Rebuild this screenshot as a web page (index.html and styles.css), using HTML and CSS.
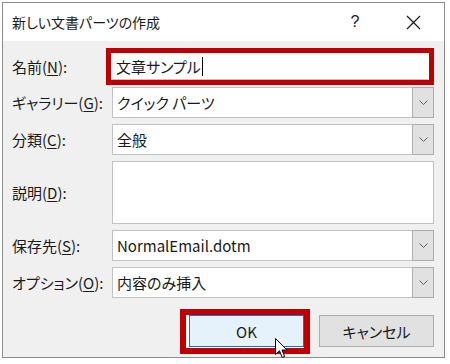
FILE: index.html
```html
<!DOCTYPE html>
<html lang="ja">
<head>
    <meta charset="UTF-8">
    <title>新しい文書パーツの作成</title>
    <link rel="stylesheet" href="styles.css">
</head>
<body>
    <div class="dialog">
        <div class="titlebar">
            <span class="title">新しい文書パーツの作成</span>
            <span class="help">?</span>
            <span class="close">
                <svg width="15" height="15" viewBox="0 0 15 15"><path d="M1 1L14 14M14 1L1 14" stroke="#1a1a1a" stroke-width="1.2" fill="none"/></svg>
            </span>
        </div>
        <div class="content">
            <div class="row row-name">
                <label class="label">名前(<u>N</u>):</label>
                <div class="mark-field">
                    <div class="field">文章サンプル<span class="caret"></span></div>
                </div>
            </div>
            <div class="row">
                <label class="label">ギャラリー(<u>G</u>):</label>
                <div class="field combo">クイック パーツ<span class="drop"><svg width="9" height="5" viewBox="0 0 9 5"><path d="M0.5 0.5L4.5 4.5L8.5 0.5" stroke="#606060" fill="none"/></svg></span></div>
            </div>
            <div class="row">
                <label class="label">分類(<u>C</u>):</label>
                <div class="field combo">全般<span class="drop"><svg width="9" height="5" viewBox="0 0 9 5"><path d="M0.5 0.5L4.5 4.5L8.5 0.5" stroke="#606060" fill="none"/></svg></span></div>
            </div>
            <div class="row row-desc">
                <label class="label">説明(<u>D</u>):</label>
                <div class="field area"></div>
            </div>
            <div class="row">
                <label class="label">保存先(<u>S</u>):</label>
                <div class="field combo">NormalEmail.dotm<span class="drop"><svg width="9" height="5" viewBox="0 0 9 5"><path d="M0.5 0.5L4.5 4.5L8.5 0.5" stroke="#606060" fill="none"/></svg></span></div>
            </div>
            <div class="row">
                <label class="label">オプション(<u>O</u>):</label>
                <div class="field combo">内容のみ挿入<span class="drop"><svg width="9" height="5" viewBox="0 0 9 5"><path d="M0.5 0.5L4.5 4.5L8.5 0.5" stroke="#606060" fill="none"/></svg></span></div>
            </div>
            <div class="buttons">
                <div class="mark-button">
                    <button class="button button-ok">OK</button>
                </div>
                <button class="button button-cancel">キャンセル</button>
            </div>
        </div>
        <svg class="pointer" width="13" height="21" viewBox="0 0 13 21">
            <path d="M0.5 0.5L0.5 16.5L4.5 12.8L7.2 19.5L9.6 18.5L7 12L12 12Z" fill="#ffffff" stroke="#000000" stroke-width="1"/>
        </svg>
    </div>
</body>
</html>
```
FILE: styles.css
```css
body {
    margin: 0;
    background-color: #ffffff;
    font-family: "Noto Sans CJK JP", "Noto Sans", sans-serif;
    font-feature-settings: "palt";
    color: #000000;
}
.dialog {
    position: relative;
    box-sizing: border-box;
    width: 443px;
    height: 356px;
    margin: 2px 0 0 2px;
    border: 1px solid #8c8c8c;
    background-color: #f0f0f0;
}
.titlebar {
    display: flex;
    align-items: center;
    height: 38px;
    background-color: #ffffff;
    padding-right: 8px;
}
.title {
    padding-left: 9px;
    font-size: 14px;
    color: #1a1a1a;
}
.help {
    margin-left: auto;
    width: 46px;
    text-align: center;
    font-family: "Liberation Sans", sans-serif;
    font-size: 16px;
    color: #1a1a1a;
}
.close {
    display: flex;
    justify-content: center;
    width: 46px;
    margin-left: 12px;
}
.content {
    padding: 7px 10px 0 9px;
}
.row {
    display: flex;
    align-items: center;
    margin-bottom: 6px;
}
.row-name {
    margin-bottom: 2px;
}
.label {
    width: 100px;
    font-size: 15px;
    color: #1a1a1a;
    white-space: nowrap;
}
.label u {
    text-underline-offset: 2px;
}
.field {
    position: relative;
    box-sizing: border-box;
    display: flex;
    align-items: center;
    width: 322px;
    height: 31px;
    padding-left: 4px;
    border: 1px solid #c2c2c2;
    background-color: #ffffff;
    font-size: 15px;
    color: #1a1a1a;
}
.mark-field {
    margin-left: -5px;
    border: 5px solid #c00000;
}
.mark-field .field {
    width: 318px;
    height: 27px;
    border-color: #ffffff #ffffff #c2c2c2 #ffffff;
}
.caret {
    display: inline-block;
    width: 1px;
    height: 19px;
    margin-left: 1px;
    background-color: #000000;
}
.combo {
    padding-right: 22px;
}
.drop {
    position: absolute;
    top: -1px;
    right: -1px;
    box-sizing: border-box;
    display: flex;
    align-items: center;
    justify-content: center;
    width: 22px;
    height: 31px;
    border: 1px solid #adadad;
    background-color: #e1e1e1;
}
.area {
    height: 63px;
}
.buttons {
    display: flex;
    justify-content: flex-end;
    align-items: flex-start;
    margin-top: 11px;
}
.mark-button {
    border: 6px solid #c00000;
    padding: 0 0 1px 3px;
    background-color: #ffffff;
    margin-right: 9px;
}
.button {
    box-sizing: border-box;
    width: 115px;
    height: 32px;
    font-family: "Noto Sans CJK JP", "Noto Sans", sans-serif;
    font-feature-settings: "palt";
    font-size: 15px;
    color: #1a1a1a;
    padding: 0;
}
.button-ok {
    display: block;
    border: 1px solid #0078d7;
    background-color: #e5f1fb;
}
.button-cancel {
    margin-top: 6px;
    border: 1px solid #adadad;
    background-color: #e1e1e1;
}
.pointer {
    position: absolute;
    left: 272px;
    top: 335px;
}
```
